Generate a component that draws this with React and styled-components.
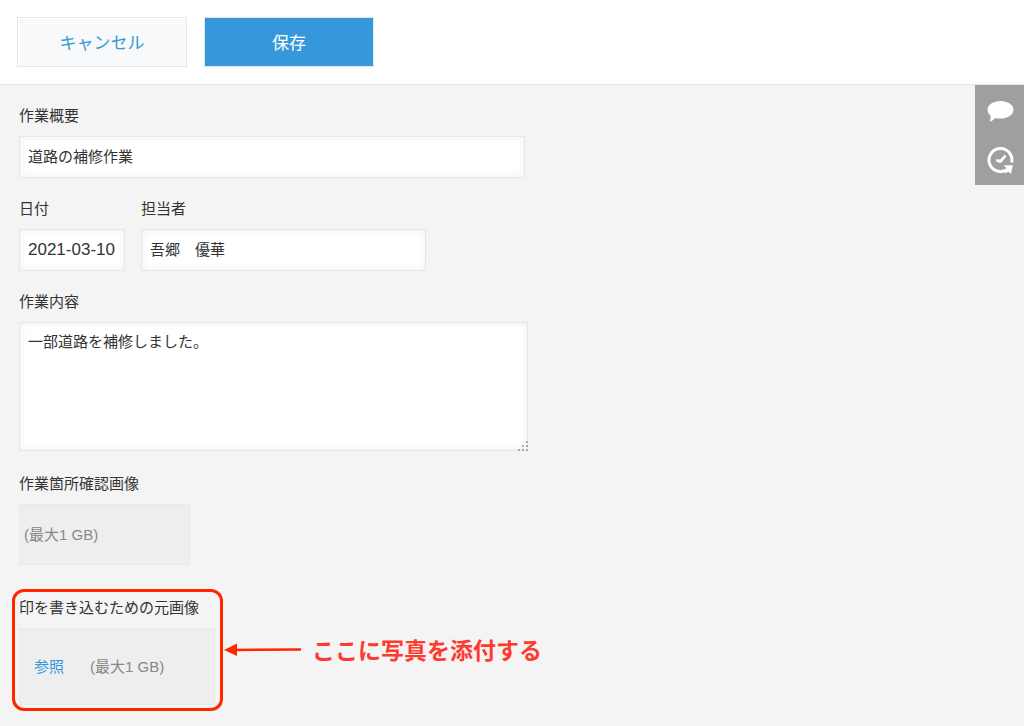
import React, { useState } from 'react';
import styled, { createGlobalStyle } from 'styled-components';

const GlobalStyle = createGlobalStyle`
  * {
    box-sizing: border-box;
  }

  body {
    margin: 0;
    background-color: #f4f4f4;
    color: #333;
    font-family: "Noto Sans CJK JP", sans-serif;
    font-size: 15px;
    line-height: 22px;
  }

  button, input, textarea {
    font: inherit;
    color: inherit;
  }
`;

let Header = styled.header`
  display: flex;
  flex-wrap: wrap;
  gap: 17px;
  padding: 17px;
  background-color: white;
  border-bottom: 1px solid #e3e7e8;
`;

let ActionButton = styled.button`
  width: 170px;
  height: 50px;
  border: 1px solid #e3e7e8;
  font-size: 17px;
  cursor: pointer;
  color: ${props => props.$primary ? 'white' : '#3498db'};
  background-color: ${props => props.$primary ? '#3498db' : '#f7f9fa'};
  box-shadow: ${props => props.$primary ? 'none' : 'inset 1px 1px 0 white'};
`;

let Body = styled.div`
  display: flex;
  align-items: flex-start;
  justify-content: space-between;
`;

let Form = styled.form`
  flex: 1;
  min-width: 0;
  padding: 19px 19px 20px;
`;

let Row = styled.div`
  display: flex;
  flex-wrap: wrap;
  gap: 16px;
  margin-bottom: ${props => props.$space || 19}px;
`;

let Field = styled.div`
  position: relative;
  max-width: 100%;
  width: ${props => props.$width}px;
`;

let Label = styled.label`
  display: block;
  margin-bottom: 10px;
  white-space: nowrap;
`;

let TextInput = styled.input`
  display: block;
  width: 100%;
  height: 42px;
  padding: 0 8px 4px;
  border: 1px solid #e3e7e8;
  border-radius: 0;
  background-color: white;
  box-shadow: inset 0 0 6px 2px #f4f4f4;
  outline: none;
`;

let DateInput = styled(TextInput)`
  padding-bottom: 0;
  font-family: "Liberation Sans", sans-serif;
  font-size: 17px;
`;

let TextArea = styled.textarea`
  display: block;
  width: 100%;
  height: 129px;
  padding: 7px 8px;
  border: 1px solid #e3e7e8;
  border-radius: 0;
  background-color: white;
  box-shadow: inset 0 0 6px 2px #f4f4f4;
  outline: none;
  resize: none;
`;

let Grip = styled.svg`
  position: absolute;
  right: -1px;
  bottom: -1px;
  pointer-events: none;
`;

let FileBox = styled.div`
  display: flex;
  align-items: center;
  gap: 26px;
  height: ${props => props.$tall ? 77 : 61}px;
  padding: 0 ${props => props.$tall ? 14 : 4}px;
  border: 1px solid #e6eaea;
  background-color: #eee;
  color: #888;
  font-family: "Liberation Sans", "Noto Sans CJK JP", sans-serif;
`;

let BrowseButton = styled.button`
  padding: 0;
  border: none;
  background: none;
  color: #3498db;
  cursor: pointer;
`;

let Highlight = styled.div`
  position: absolute;
  inset: -7px -8px -6px -7px;
  border: 3px solid #ff2600;
  border-radius: 12px;
  pointer-events: none;
`;

let Callout = styled.div`
  position: absolute;
  left: 100%;
  top: 36px;
  display: flex;
  align-items: center;
  gap: 11px;
  margin-left: 9px;
  color: #ff3b30;
  font-size: 23px;
  font-weight: 700;
  line-height: 34px;
  white-space: nowrap;
`;

let SideMenu = styled.nav`
  display: flex;
  flex-direction: column;
  width: 49px;
  background-color: #9f9f9f;
`;

let SideButton = styled.button`
  display: flex;
  align-items: center;
  justify-content: center;
  height: 50px;
  padding: 0;
  border: none;
  background: none;
  cursor: pointer;
`;

const CommentIcon = () => (
  <svg width="28" height="28" viewBox="0 0 28 28" fill="white">
    <path d="M14.500 5C7.300 5 1.500 8.800 1.500 13.700c0 2.400 1.200 4.500 3.200 6.100 0 2-.2 3.800-.9 5.900 2.200-.8 3.900-2.100 5.300-3.800 1.700.5 3.500.7 5.400.7 7.200 0 13-4 13-8.900S21.700 5 14.500 5z" />
  </svg>
);

const HistoryIcon = () => (
  <svg width="28" height="28" viewBox="0 0 28 28" fill="none">
    <path d="M25.700 16.500A11.500 11.500 0 1 0 19.500 24.400" stroke="white" strokeWidth="3" />
    <path d="M17.500 19.200h9.300L24.900 28l-2.400-2.300-3.400 1.500-1.200-2.600 2.400-2.600z" fill="white" />
    <path d="M18.700 8.800l1.700 1.400-4.400 5.800-2 .9-4-1.700v-2l4.200.3z" fill="white" />
  </svg>
);

const Arrow = () => (
  <svg width="77" height="14" viewBox="0 0 77 14">
    <path d="M11 8L77 7.500" stroke="#ff2600" strokeWidth="2.500" />
    <path d="M0 8L13 1.500v12.500z" fill="#ff2600" />
  </svg>
);

export default function App() {
  const [values, setValues] = useState({
    summary: '道路の補修作業',
    date: '2021-03-10',
    person: '吾郷　優華',
    detail: '一部道路を補修しました。'
  });

  const bind = name => ({
    id: name,
    name,
    value: values[name],
    onChange: e => setValues({ ...values, [name]: e.target.value })
  });

  return (
    <>
      <GlobalStyle />
      <Header>
        <ActionButton type="button">キャンセル</ActionButton>
        <ActionButton type="submit" form="record" $primary>保存</ActionButton>
      </Header>
      <Body>
        <Form id="record" onSubmit={e => e.preventDefault()}>
          <Row>
            <Field $width={506}>
              <Label htmlFor="summary">作業概要</Label>
              <TextInput {...bind('summary')} />
            </Field>
          </Row>
          <Row>
            <Field $width={106}>
              <Label htmlFor="date">日付</Label>
              <DateInput {...bind('date')} />
            </Field>
            <Field $width={285}>
              <Label htmlFor="person">担当者</Label>
              <TextInput {...bind('person')} />
            </Field>
          </Row>
          <Row $space={21}>
            <Field $width={509}>
              <Label htmlFor="detail">作業内容</Label>
              <TextArea {...bind('detail')} />
              <Grip width="11" height="11" viewBox="0 0 11 11" fill="#a4adb4">
                <path d="M8 0h2v2H8zM4 4h2v2H4zM8 4h2v2H8zM0 8h2v2H0zM4 8h2v2H4zM8 8h2v2H8z" />
              </Grip>
            </Field>
          </Row>
          <Row $space={31}>
            <Field $width={171}>
              <Label as="div">作業箇所確認画像</Label>
              <FileBox>(最大1 GB)</FileBox>
            </Field>
          </Row>
          <Row>
            <Field $width={196}>
              <Label htmlFor="browse">印を書き込むための元画像</Label>
              <FileBox $tall>
                <BrowseButton id="browse" type="button">参照</BrowseButton>
                <span>(最大1 GB)</span>
              </FileBox>
              <Highlight />
              <Callout>
                <Arrow />
                <span>ここに写真を添付する</span>
              </Callout>
            </Field>
          </Row>
        </Form>
        <SideMenu>
          <SideButton type="button" aria-label="コメント"><CommentIcon /></SideButton>
          <SideButton type="button" aria-label="変更履歴"><HistoryIcon /></SideButton>
        </SideMenu>
      </Body>
    </>
  );
}
